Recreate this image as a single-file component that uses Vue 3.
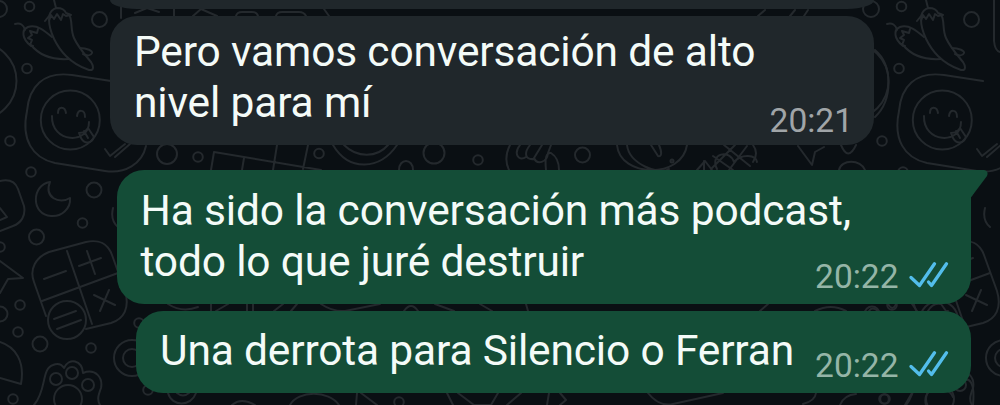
<template>
  <main class="chat">
    <svg class="wallpaper" viewBox="0 0 1000 405" aria-hidden="true">
      <defs>
        <g id="doodles">
          <circle v-for="(dot, i) in dots" :key="i" :cx="dot[0]" :cy="dot[1]" :r="dot[2]" />

          <!-- peppers -->
          <path d="M54 0l2 8M45 21l4-5q2-7 8-8 7 0 9 5l5 2-5 1-3-2-2 6-4-6-3 5-3-4-2 6M49 19c0 13 8 28 17 37 7 7 14 11 23 14 6 1 4-5 2-8-5-6-13-15-17-24-4-9-1-17-5-24" />
          <path d="M15 24q8-2 10 6M33 46l-3-1 2-5-4-2 4-3-2-4 7 2 1-4M31 46c-9-7-10-16-3-19 9-3 17 4 24 10M31 45c9 11 23 15 38 14M80 48c7 0 13 3 12 5-1 3-5 3-9 1" />

          <!-- winking message -->
          <path d="M111 81L72 75C43 71 29 87 27 111c-6 28 5 47 28 52l50 8c20 3 37-7 41-25" />
          <circle cx="70.3" cy="120" r="29.5" />
          <path d="M52 116c-1 27 37 29 37 6M58 113c0-7 7-7 8 0M77 116c1-7 8-7 8 1M79 133c4 0 7-2 9-5l6 9c-2 6-9 8-13 1zM84 131l4 7" />
          <path d="M105 149l5 7 15-12M115 157l15-13" />

          <!-- moon and cards -->
          <path d="M50 182c-19 3-19 33 1 34 10 1 20-7 19-18-11 7-26-1-20-16z" />
          <path d="M0 181c9-2 15 0 18 8l6 17c2 10-3 17-11 20L0 231M0 208l7 9-7 3M0 261l23 17-15 1-8 14" />
          <path d="M113 208q-3 12 5 19M0 342c16 5 25 20 21 42L0 378" />

          <!-- calculator -->
          <path d="M46 316l-12-34c-5-13 2-25 15-30l37-10c13-3 22 2 26 13l13 36c5 17-1 28-14 32l-25 6M67 251l25 73M42 301l76-28M44 279l22-8M79 266l22-8M87 251l8 23M94 295l21 10M109 290l-9 21" />
          <circle cx="67" cy="320" r="19" />
          <path d="M54 319l22-8M57 329l24-9" />

          <!-- paw -->
          <path d="M34 405c13-15 7-36 19-40 5-2 9 0 11 3 5-11 18-8 19 5 13-5 20 5 18 15-3 8-4 12-1 17" />
          <circle cx="56" cy="379" r="6" />
          <circle cx="72" cy="373" r="6" />
          <circle cx="88" cy="385" r="6" />
          <circle cx="68" cy="399" r="14" />
          <circle cx="132" cy="358" r="18" />
          <circle cx="132" cy="358" r="9" />
        </g>
      </defs>

      <g class="doodle-lines">
        <use href="#doodles" />
        <use href="#doodles" x="872" />
        <path d="M121 0v18M135 13l12-5 12 4M174 9v8M193 16l8-7 16 7M236 16q1-4 6-4h10q5 0 6 4M276 16q1-4 6-4h17q5 0 7 4M324 9l5 7" />
        <path d="M211 170l3-18 107 18M244 158l-2 12M277 145l-4 25M308 145l-5 24M333 145c16 27 47 25 64 0M344 145c13 13 33 13 44 0M399 170c0-12 14-12 14 0" />
        <path d="M510 145c-4 8-5 17-1 25M520 145c-7 9-1 17 6 12M530 145c-7 9-4 15 4 14M542 145l-8 13c3 7 13 5 14-5l3-8M546 170q-2-18 5-17 8 5 8 17" />
        <path d="M617 145c3 33 65 34 70 0M627 145c2 19 33 31 42 24M651 145l7 11c4 1 4-4 1-11M697 170l8-9 7 9M704 161v9M711 169l24-24M713 156l20 14M724 145l26 21M717 169c-8-16 13-20 17-7 8-9 22-7 23 0M729 170l18-24" />
        <path d="M753 145q6 8 0 17M798 146l14 19 3-13 9-5M841 145q7 17 15 0M839 170c2-11 22-11 26 0M875 50c18 15 18 50 0 67M758 16l7-6M790 16l5-6M808 10l-4 6" />
        <path d="M168 304q14 9 30 3M211 304v7M216 311l12-7M247 304v7M253 304v7M274 311l9-7M291 311l6-7M321 304q12 8 24 7l35-7M404 311q7-10 14 0M435 304l19 7M480 304l12 7M526 304l2 7M760 311l8-7M815 311q16-8 31 0M869 311q3-5 9 0M888 304q5 8 8 0M912 304l5 7M928 311q5-9 13-7l15 21" />
        <path d="M168 393c4 14 23 14 28 0M177 393q6 5 12 0M232 405q9-8 23 0M290 405c8-15 39-15 49 0M357 393l-1 12M361 393l16 12M447 393l6 12M458 393l16 12h17l7-12M507 405l14-12M549 393l-2 12M560 393l6 7-6 5M648 393q11 14 25 11l50-11M816 393q-1 8-13 11M840 405q4-10 16-11M905 405l7-12M926 405c-5-18 20-23 27-8M960 381q16-8 13 24" />
        <path d="M994 0v41q1 10 6 11" />
      </g>
    </svg>

    <div class="bubble incoming cut"></div>

    <article
      v-for="message in messages"
      :key="message.id"
      class="bubble"
      :class="[message.mine ? 'outgoing' : 'incoming', message.kind]"
    >
      <p class="text">
        <span v-for="line in message.lines" :key="line">{{ line }}</span>
      </p>
      <footer class="meta">
        <time>{{ message.time }}</time>
        <svg v-if="message.mine" class="ticks" viewBox="0 0 40 28">
          <path d="M2 14.5l8.5 8L25.500 0.800M19.500 19l3 3.500L37.500 0.800" />
        </svg>
      </footer>
      <svg v-if="message.kind === 'first'" class="tail" viewBox="0 0 45 30">
        <path d="M0 0h41q5 1 3 6L27.500 28V30H0z" />
      </svg>
    </article>
  </main>
</template>

<script setup>
const messages = [
  {
    id: 1,
    mine: false,
    kind: "received",
    lines: ["Pero vamos conversación de alto", "nivel para mí"],
    time: "20:21",
  },
  {
    id: 2,
    mine: true,
    kind: "first",
    lines: ["Ha sido la conversación más podcast,", "todo lo que juré destruir"],
    time: "20:22",
  },
  {
    id: 3,
    mine: true,
    kind: "last",
    lines: ["Una derrota para Silencio o Ferran"],
    time: "20:22",
  },
];

// x, y, radius
const dots = [
  [-1, 9, 8],
  [29.5, 6.5, 4.8],
  [99.5, 19.5, 7.5],
  [27, 68.5, 4.8],
  [-22, 81, 38.5],
  [10, 141, 4.8],
  [31, 172, 4.8],
  [94, 190, 7.5],
  [82.5, 223, 4.8],
  [36.5, 237, 7.5],
  [0, 247, 4.8],
  [20, 305, 4.8],
  [0, 314, 7.5],
  [18, 332, 4.8],
  [40, 344, 7.5],
  [91, 348, 4.8],
  [13, 399, 4.8],
  [139, 323, 4.8],
  [148, 390, 4.8],
  [167, 154, 10],
  [198, 157, 4.8],
  [319, 153.5, 4.8],
  [434, 153, 10.5],
  [478, 160, 4.8],
  [582.5, 155, 7.5],
  [672, 161, 1.5],
  [399, 402, 4.8],
  [884, 399, 4.8],
];
</script>

<style>
body {
  margin: 0;
  background: #0a0f13;
}
</style>

<style scoped>
.chat {
  position: relative;
  display: flex;
  flex-direction: column;
  width: 1000px;
  height: 405px;
  overflow: hidden;
  background: #0a0f13;
  font-family: Roboto, "Liberation Sans", sans-serif;
}

.wallpaper {
  position: absolute;
  width: 1000px;
  height: 405px;
}

.doodle-lines {
  fill: none;
  stroke: #24292d;
  stroke-width: 2;
  stroke-linecap: round;
  stroke-linejoin: round;
}

.bubble {
  position: relative;
  display: flex;
  box-sizing: border-box;
  flex-shrink: 0;
  align-items: flex-end;
  justify-content: space-between;
  border-radius: 27px;
}

.incoming {
  width: 764px;
  margin-left: 110px;
  background: #20272b;
}

.outgoing {
  background: #144d37;
}

.cut {
  height: 9px;
  border-radius: 0 0 27px 27px / 0 0 9px 9px;
}

.received {
  height: 129px;
  margin-top: 7px;
  padding: 0 21px 17px 24px;
}

.first {
  z-index: 1;
  width: 854px;
  height: 134px;
  margin: 25px 0 0 116.5px;
  padding: 0 22px 17px 24px;
  border-top-right-radius: 0;
}

.last {
  width: 834.5px;
  height: 82.5px;
  margin: 6.5px 0 0 136px;
  padding: 0 22px 17px 24px;
}

.text {
  margin: 0;
  color: #f4fbf8;
  font-size: 42.5px;
  line-height: 51px;
  letter-spacing: -0.17px;
  white-space: nowrap;
}

.text span {
  display: block;
}

.meta {
  display: flex;
  align-items: center;
  gap: 10px;
  margin-bottom: -10px;
  margin-left: -60px;
  color: #a0a5a8;
  font-size: 33.5px;
  line-height: 34px;
}

.outgoing .meta {
  margin-bottom: -7px;
  color: #95b5a7;
}

.ticks {
  width: 40px;
  height: 28px;
  overflow: visible;
  fill: none;
  stroke: #53bdeb;
  stroke-width: 3.3;
  stroke-linecap: round;
  stroke-linejoin: round;
}

.tail {
  position: absolute;
  z-index: -1;
  top: 0;
  right: -17px;
  width: 45px;
  height: 30px;
  fill: #144d37;
}
</style>
